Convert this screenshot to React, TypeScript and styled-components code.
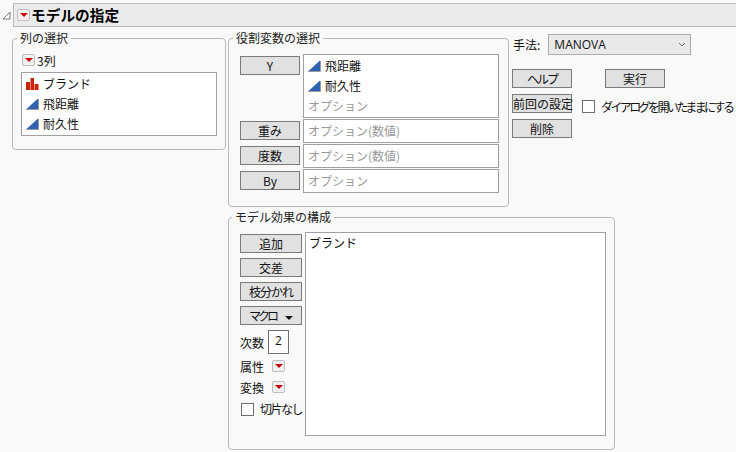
import React from "react";
import styled, { createGlobalStyle } from "styled-components";

const GlobalStyle = createGlobalStyle`
  html, body {
    margin: 0;
    padding: 0;
    background: #f9f9f9;
  }
  body {
    font-family: "Noto Sans CJK JP", "Noto Sans", sans-serif;
    font-size: 12px;
    color: #111;
  }
`;

const Page = styled.div`
  width: 736px;
  height: 452px;
  overflow: hidden;
  padding-top: 3px;
  box-sizing: border-box;
`;

const OutlineRow = styled.div`
  display: flex;
  align-items: center;
  height: 24px;
`;

const Disclosure = styled.svg`
  width: 9px;
  height: 9px;
  margin: 0 2px 0 2px;
  flex: none;
`;

const Header = styled.div`
  flex: 1;
  height: 24px;
  box-sizing: border-box;
  background: #ebebeb;
  border: 1px solid #b9b9b9;
  border-right: none;
  display: flex;
  align-items: center;
  padding-left: 3px;
  gap: 1px;
`;

const Title = styled.h1`
  margin: 0;
  font-size: 14.7px;
  line-height: 20px;
  font-weight: 700;
  color: #000;
`;

const MenuBtn = styled.span`
  display: inline-flex;
  align-items: center;
  justify-content: center;
  flex: none;
  width: 13px;
  height: 12px;
  box-sizing: border-box;
  background: #f4f0f0;
  border: 1px solid #bdbdbd;
  border-radius: 2px;
  &::after {
    content: "";
    border-left: 4px solid transparent;
    border-right: 4px solid transparent;
    border-top: 4px solid #c8000a;
  }
`;

const Body = styled.div`
  display: flex;
  align-items: flex-start;
  margin: 4px 0 0 12px;
  gap: 2px;
`;

const Main = styled.div`
  display: flex;
  flex-direction: column;
  gap: 3px;
`;

const TopRow = styled.div`
  display: flex;
  align-items: flex-start;
`;

const Panel = styled.fieldset<{ $w: number; $h: number }>`
  width: ${(p) => p.$w}px;
  height: ${(p) => p.$h}px;
  margin: 0;
  box-sizing: border-box;
  border: 1px solid #b9b9b9;
  border-radius: 4px;
  flex: none;
  min-width: 0;
`;

const ColumnsPanel = styled(Panel)`
  padding: 0 8px;
`;

const RolesPanel = styled(Panel)`
  padding: 9px 8px 0 11px;
  display: flex;
  flex-direction: column;
  gap: 1px;
`;

const EffectsPanel = styled(Panel)`
  padding: 8px 7px 0 11px;
  display: flex;
  gap: 3px;
`;

const Legend = styled.legend<{ $x: number }>`
  padding: 0 3px;
  margin-left: ${(p) => p.$x}px;
  font-size: 12px;
  line-height: 14px;
  color: #222;
`;

const CountRow = styled.div`
  display: flex;
  align-items: center;
  height: 18px;
  margin: 6px 0 0 1px;
  gap: 2px;
  line-height: 18px;
  & > span:last-child {
    margin-top: 2px;
  }
`;

const ListBox = styled.div`
  width: 196px;
  height: 64px;
  box-sizing: border-box;
  margin-top: 3px;
  background: #fff;
  border: 1px solid #a0a0a0;
  padding: 1px 0 0 4px;
`;

const ListItem = styled.div<{ $gray?: boolean }>`
  display: flex;
  align-items: center;
  gap: 4px;
  height: 20px;
  line-height: 20px;
  font-size: 12px;
  color: ${(p) => (p.$gray ? "#9a9a9a" : "#111")};
`;

const IconSvg = styled.svg`
  width: 13px;
  height: 12px;
  flex: none;
`;

const RoleRow = styled.div`
  display: flex;
  gap: 3px;
  align-items: flex-start;
`;

const Btn = styled.button<{ $w?: number; $track?: number }>`
  width: ${(p) => p.$w ?? 60}px;
  height: 19px;
  box-sizing: border-box;
  margin: 0;
  padding: 0;
  background: #e1e1e1;
  border: 1px solid #7a7a7a;
  border-radius: 0;
  font-family: inherit;
  font-size: 12px;
  line-height: 16px;
  letter-spacing: ${(p) => p.$track ?? 0}px;
  color: #111;
  flex: none;
  white-space: nowrap;
`;

const RoleBtn = styled(Btn)`
  margin-top: 2px;
`;

const RoleBox = styled.div<{ $h: number }>`
  width: 196px;
  height: ${(p) => p.$h}px;
  box-sizing: border-box;
  background: #fff;
  border: 1px solid #a0a0a0;
  padding: 1px 0 0 4px;
`;

const Side = styled.div`
  margin-left: 3px;
  width: 224px;
  flex: none;
  margin-top: 2px;
`;

const MethodRow = styled.div`
  display: flex;
  align-items: center;
  gap: 8px;
  margin-left: 1px;
  height: 22px;
`;

const Select = styled.div`
  width: 143px;
  height: 21px;
  box-sizing: border-box;
  background: #e9e9e9;
  border: 1px solid #adadad;
  display: flex;
  align-items: center;
  justify-content: space-between;
  padding: 0 4px 0 5px;
  font-family: "Open Sans", "Noto Sans", sans-serif;
  font-size: 12px;
  color: #111;
`;

const SideGrid = styled.div`
  display: grid;
  grid-template-columns: 60px auto;
  grid-template-rows: 19px 19px 19px;
  column-gap: 10px;
  row-gap: 6px;
  margin-top: 14px;
`;

const RunBtn = styled(Btn)`
  margin-left: 23px;
`;

const CheckRow = styled.label`
  display: flex;
  align-items: center;
  gap: 6px;
  font-size: 12px;
  line-height: 14px;
  white-space: nowrap;
`;

const KeepOpenRow = styled(CheckRow)`
  margin-top: 6px;
`;

const KeepOpenText = styled.span`
  letter-spacing: -2.6px;
`;

const Check = styled.span`
  display: inline-block;
  width: 13px;
  height: 13px;
  box-sizing: border-box;
  background: #fff;
  border: 1px solid #6e6e6e;
  flex: none;
`;

const ControlColumn = styled.div`
  width: 62px;
  flex: none;
  display: flex;
  flex-direction: column;
  gap: 5px;
  padding-top: 2px;
`;

const DegreeRow = styled.div`
  display: flex;
  align-items: center;
  gap: 4px;
  height: 24px;
`;

const DegreeInput = styled.span`
  width: 21px;
  height: 24px;
  box-sizing: border-box;
  background: #fff;
  border: 1px solid #6e6e6e;
  text-align: center;
  font-family: "Open Sans", sans-serif;
  font-size: 12px;
  line-height: 20px;
`;

const AttrRow = styled.div`
  display: flex;
  align-items: center;
  gap: 8px;
  height: 16px;
`;

const AttrFirst = styled(AttrRow)`
  margin-top: -1px;
`;

const InterceptRow = styled(CheckRow)`
  margin-left: 1px;
  margin-top: 2px;
`;

const InterceptText = styled.span`
  letter-spacing: -1.5px;
`;

const EffectsBox = styled.div`
  width: 301px;
  height: 204px;
  box-sizing: border-box;
  background: #fff;
  border: 1px solid #a0a0a0;
  padding: 1px 0 0 3px;
  font-size: 12px;
  line-height: 18px;
`;

const Caret = styled.span`
  display: inline-block;
  margin-left: 9px;
  vertical-align: 1px;
  border-left: 4px solid transparent;
  border-right: 4px solid transparent;
  border-top: 4px solid #111;
`;

function Continuous() {
  return (
    <IconSvg viewBox="0 0 13 12">
      <path d="M0.5 11 L12 0.5 V11 Z" fill="#2f62b0" />
      <path d="M0 11.5 H12.5 V1" fill="none" stroke="#9a9a9a" strokeWidth="1" />
    </IconSvg>
  );
}

function Nominal() {
  return (
    <IconSvg viewBox="0 0 13 12">
      <path d="M0 4h4v8H0zM4.5 0h3.5v12H4.5zM8.5 6h4v6h-4z" fill="#cc2200" />
    </IconSvg>
  );
}

export default function App() {
  return (
    <Page>
      <GlobalStyle />
      <OutlineRow>
        <Disclosure viewBox="0 0 9 9">
          <path d="M8 1 V8 H1 Z" fill="#fff" stroke="#777" strokeWidth="1" />
        </Disclosure>
        <Header>
          <MenuBtn />
          <Title>モデルの指定</Title>
        </Header>
      </OutlineRow>
      <Body>
        <ColumnsPanel $w={214} $h={119}>
          <Legend $x={-4}>列の選択</Legend>
          <CountRow>
            <MenuBtn />
            <span>3列</span>
          </CountRow>
          <ListBox>
            <ListItem>
              <Nominal />
              ブランド
            </ListItem>
            <ListItem>
              <Continuous />
              飛距離
            </ListItem>
            <ListItem>
              <Continuous />
              耐久性
            </ListItem>
          </ListBox>
        </ColumnsPanel>
        <Main>
          <TopRow>
            <RolesPanel $w={281} $h={176}>
              <Legend $x={-7}>役割変数の選択</Legend>
              <RoleRow>
                <RoleBtn>Y</RoleBtn>
                <RoleBox $h={64}>
                  <ListItem>
                    <Continuous />
                    飛距離
                  </ListItem>
                  <ListItem>
                    <Continuous />
                    耐久性
                  </ListItem>
                  <ListItem $gray>オプション</ListItem>
                </RoleBox>
              </RoleRow>
              <RoleRow>
                <RoleBtn>重み</RoleBtn>
                <RoleBox $h={24}>
                  <ListItem $gray>オプション(数値)</ListItem>
                </RoleBox>
              </RoleRow>
              <RoleRow>
                <RoleBtn>度数</RoleBtn>
                <RoleBox $h={24}>
                  <ListItem $gray>オプション(数値)</ListItem>
                </RoleBox>
              </RoleRow>
              <RoleRow>
                <RoleBtn>By</RoleBtn>
                <RoleBox $h={24}>
                  <ListItem $gray>オプション</ListItem>
                </RoleBox>
              </RoleRow>
            </RolesPanel>
            <Side>
              <MethodRow>
                <span>手法:</span>
                <Select>
                  MANOVA
                  <svg width="8" height="5" viewBox="0 0 8 5">
                    <path d="M1 1 L4 4 L7 1" fill="none" stroke="#666" strokeWidth="1" />
                  </svg>
                </Select>
              </MethodRow>
              <SideGrid>
                <Btn $track={-2}>ヘルプ</Btn>
                <RunBtn>実行</RunBtn>
                <Btn>前回の設定</Btn>
                <KeepOpenRow>
                  <Check />
                  <KeepOpenText>ダイアログを開いたままにする</KeepOpenText>
                </KeepOpenRow>
                <Btn>削除</Btn>
              </SideGrid>
            </Side>
          </TopRow>
          <EffectsPanel $w={387} $h={240}>
            <Legend $x={-8}>モデル効果の構成</Legend>
            <ControlColumn>
              <Btn $w={62}>追加</Btn>
              <Btn $w={62}>交差</Btn>
              <Btn $w={62} $track={-1}>枝分かれ</Btn>
              <Btn $w={62} $track={-3}>
                マクロ
                <Caret />
              </Btn>
              <DegreeRow>
                次数
                <DegreeInput>2</DegreeInput>
              </DegreeRow>
              <AttrFirst>
                属性
                <MenuBtn />
              </AttrFirst>
              <AttrRow>
                変換
                <MenuBtn />
              </AttrRow>
              <InterceptRow>
                <Check />
                <InterceptText>切片なし</InterceptText>
              </InterceptRow>
            </ControlColumn>
            <EffectsBox>ブランド</EffectsBox>
          </EffectsPanel>
        </Main>
      </Body>
    </Page>
  );
}
